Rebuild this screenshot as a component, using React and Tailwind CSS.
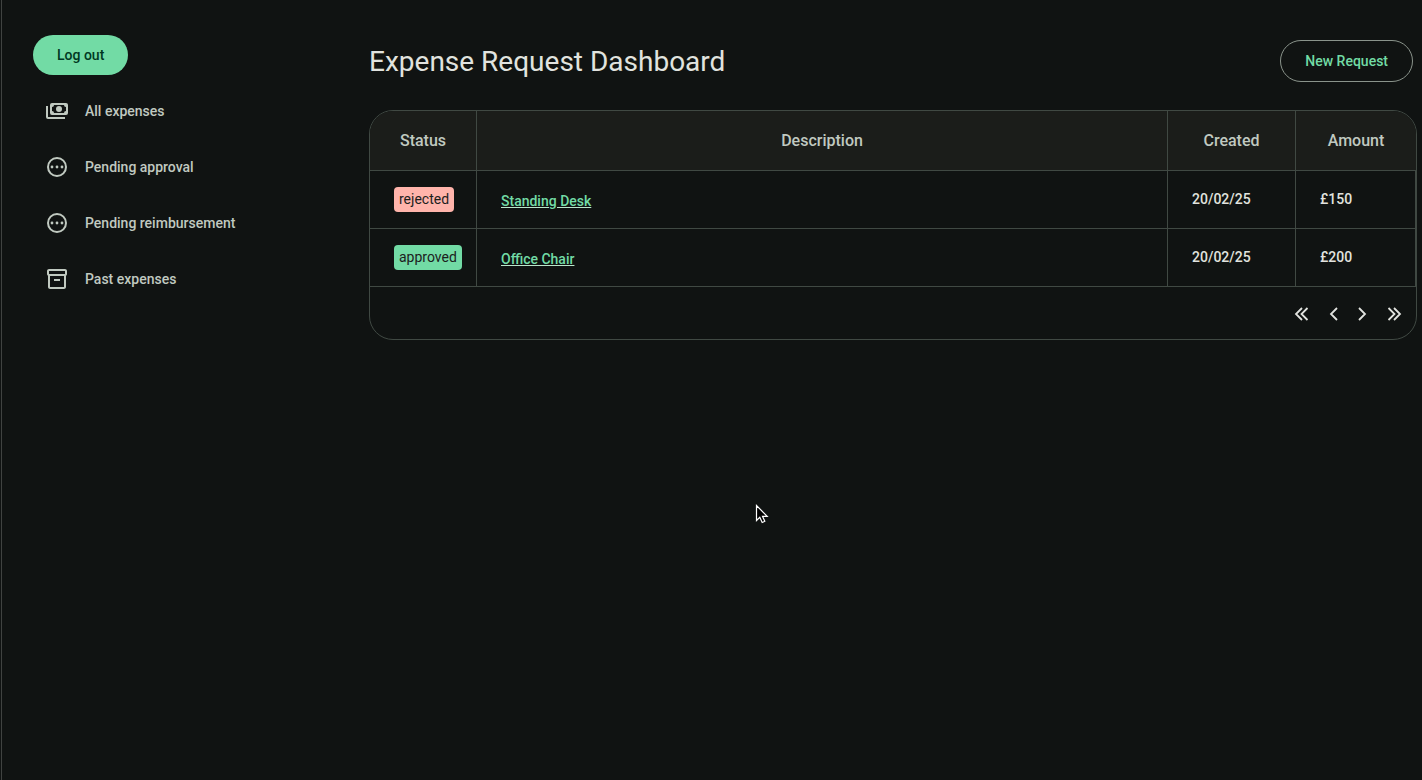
import clsx from 'clsx'

const iconClass = 'size-6 shrink-0'

function PaymentsIcon() {
  return (
    <svg viewBox="0 0 24 24" fill="currentColor" className={iconClass} aria-hidden="true">
      <path
        fillRule="evenodd"
        d="M7 4h14a2 2 0 0 1 2 2v8a2 2 0 0 1-2 2H7a2 2 0 0 1-2-2V6a2 2 0 0 1 2-2zM9 6a2 2 0 0 1-2 2v4a2 2 0 0 1 2 2h10a2 2 0 0 1 2-2V8a2 2 0 0 1-2-2z"
      />
      <circle cx="14" cy="10" r="3" />
      <path d="M1 7h2v11h17v2H3a2 2 0 0 1-2-2z" />
    </svg>
  )
}

function PendingIcon() {
  return (
    <svg viewBox="0 0 24 24" fill="currentColor" className={iconClass} aria-hidden="true">
      <circle cx="12" cy="12" r="9" fill="none" stroke="currentColor" strokeWidth="2" />
      <circle cx="7" cy="12" r="1.4" />
      <circle cx="12" cy="12" r="1.4" />
      <circle cx="17" cy="12" r="1.4" />
    </svg>
  )
}

function ArchiveIcon() {
  return (
    <svg viewBox="0 0 24 24" fill="currentColor" className={iconClass} aria-hidden="true">
      <path
        fillRule="evenodd"
        d="M4 2h16c1 0 2 .9 2 2v3c0 .7-.4 1.4-1 1.700V20c0 1.100-1.100 2-2 2H5c-.9 0-2-.9-2-2V8.700C2.400 8.400 2 7.700 2 7V4c0-1.100 1-2 2-2zM5 9v11h14V9zM4 4v3h16V4z"
      />
      <path d="M9 12h6v2H9z" />
    </svg>
  )
}

const navItems = [
  { label: 'All expenses', Icon: PaymentsIcon },
  { label: 'Pending approval', Icon: PendingIcon },
  { label: 'Pending reimbursement', Icon: PendingIcon },
  { label: 'Past expenses', Icon: ArchiveIcon },
]

const expenses = [
  { status: 'rejected', description: 'Standing Desk', created: '20/02/25', amount: '£150' },
  { status: 'approved', description: 'Office Chair', created: '20/02/25', amount: '£200' },
]

const pagerButtons = [
  { label: 'First page', path: 'M8 2 2 8l6 6M13.500 2l-6 6 6 6', className: 'mr-4' },
  { label: 'Previous page', path: 'M11 2 5 8l6 6', className: 'mr-3' },
  { label: 'Next page', path: 'M5 2l6 6-6 6', className: 'mr-4' },
  { label: 'Last page', path: 'M2.500 2l6 6-6 6M8 2l6 6-6 6', className: '' },
]

function Sidebar() {
  return (
    <aside className="w-[367px] shrink-0 pl-[31px] pt-[35px]">
      <button
        type="button"
        className="h-10 rounded-full bg-[#72dba5] px-6 text-sm font-medium text-[#003822]"
      >
        Log out
      </button>
      <nav className="mt-2">
        {navItems.map(({ label, Icon }) => (
          <a
            key={label}
            href="#"
            className="flex h-14 items-center gap-4 px-3 text-sm font-medium text-[#c0c9c0]"
          >
            <Icon />
            {label}
          </a>
        ))}
      </nav>
    </aside>
  )
}

function StatusBadge({ status }) {
  return (
    <span
      className={clsx(
        'inline-block rounded-[4px] px-[5px] text-sm leading-[25px] text-[#1c211d]',
        status === 'rejected' ? 'bg-[#ffb4ab]' : 'bg-[#72dba5]',
      )}
    >
      {status}
    </span>
  )
}

function ExpenseTable() {
  const th = 'h-[60px] border-b border-[#404943] p-0 text-base font-medium'
  const td = 'h-[58px] border-r border-b border-[#404943] pl-6 text-sm'

  return (
    <div className="overflow-hidden rounded-3xl border border-[#404943]">
      <table className="w-full table-fixed border-separate border-spacing-0">
        <colgroup>
          <col className="w-[107px]" />
          <col />
          <col className="w-[128px]" />
          <col className="w-[120px]" />
        </colgroup>
        <thead className="bg-[#1b1d1a] text-[#c0c9c0]">
          <tr>
            <th className={clsx(th, 'border-r')}>Status</th>
            <th className={clsx(th, 'border-r')}>Description</th>
            <th className={clsx(th, 'border-r')}>Created</th>
            <th className={th}>Amount</th>
          </tr>
        </thead>
        <tbody>
          {expenses.map((expense) => (
            <tr key={expense.description}>
              <td className={clsx(td, 'py-0')}>
                <StatusBadge status={expense.status} />
              </td>
              <td className={clsx(td, 'pt-0.5 pb-0')}>
                <a
                  href="#"
                  className="font-medium text-[#72dba5] underline decoration-[#b9e6cb]"
                >
                  {expense.description}
                </a>
              </td>
              <td className={clsx(td, 'pt-0 pb-0.5 font-medium')}>{expense.created}</td>
              <td className={clsx(td, 'pt-0 pb-0.5 font-medium')}>{expense.amount}</td>
            </tr>
          ))}
        </tbody>
      </table>

      {/* Pagination */}
      <div className="flex h-[52px] items-center justify-end pt-0.5 pr-3.5">
        {pagerButtons.map(({ label, path, className }) => (
          <button key={label} type="button" aria-label={label} className={className}>
            <svg
              viewBox="0 0 16 16"
              fill="none"
              stroke="currentColor"
              strokeWidth="1.8"
              className="size-4"
              aria-hidden="true"
            >
              <path d={path} />
            </svg>
          </button>
        ))}
      </div>
    </div>
  )
}

function Pointer() {
  return (
    <svg
      viewBox="0 0 14 20"
      className="pointer-events-none absolute top-[504px] left-[755px] h-5 w-3.5"
      aria-hidden="true"
    >
      <path
        d="M1.500 1.500v15l3.300-3.200 2.400 5.200 2.600-1.200-2.300-5h4.700z"
        fill="#000"
        stroke="#fff"
        strokeWidth="1.2"
      />
    </svg>
  )
}

export default function App() {
  return (
    <div className="relative bg-[#101312] pl-px font-[Roboto,sans-serif] text-[#e1e3df]">
      <div className="flex min-h-screen border-l border-[#404341]">
        <Sidebar />
        <main className="min-w-0 flex-1 pt-10 pr-[5px]">
          <header className="mb-7 flex items-center justify-between pr-1">
            <h1 className="pt-0.5 text-[28px] leading-9">Expense Request Dashboard</h1>
            <button
              type="button"
              className="h-[42px] rounded-full border border-[#8a938b] px-6 text-sm font-medium text-[#72dba5]"
            >
              New Request
            </button>
          </header>
          <ExpenseTable />
        </main>
      </div>
      <Pointer />
    </div>
  )
}
